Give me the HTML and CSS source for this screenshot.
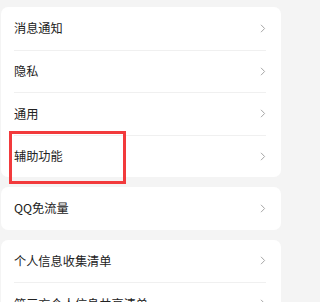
FILE: index.html
```html
<!DOCTYPE html>
<html lang="zh-CN">
<head>
<meta charset="utf-8">
<link rel="stylesheet" href="styles.css">
</head>
<body>
<div class="page">
  <section class="card">
    <div class="row"><span class="label">消息通知</span><svg class="chev" viewBox="0 0 6 9"><path d="M1 0.8 L4.6 4.5 L1 8.2"/></svg></div>
    <div class="row"><span class="label">隐私</span><svg class="chev" viewBox="0 0 6 9"><path d="M1 0.8 L4.6 4.5 L1 8.2"/></svg></div>
    <div class="row"><span class="label">通用</span><svg class="chev" viewBox="0 0 6 9"><path d="M1 0.8 L4.6 4.5 L1 8.2"/></svg></div>
    <div class="row"><span class="label">辅助功能</span><svg class="chev" viewBox="0 0 6 9"><path d="M1 0.8 L4.6 4.5 L1 8.2"/></svg></div>
  </section>
  <section class="card">
    <div class="row"><span class="label">QQ免流量</span><svg class="chev" viewBox="0 0 6 9"><path d="M1 0.8 L4.6 4.5 L1 8.2"/></svg></div>
  </section>
  <section class="card">
    <div class="row"><span class="label">个人信息收集清单</span><svg class="chev" viewBox="0 0 6 9"><path d="M1 0.8 L4.6 4.5 L1 8.2"/></svg></div>
    <div class="row"><span class="label">第三方个人信息共享清单</span><svg class="chev" viewBox="0 0 6 9"><path d="M1 0.8 L4.6 4.5 L1 8.2"/></svg></div>
  </section>
  <div class="highlight"></div>
</div>
</body>
</html>
```

FILE: styles.css
```css
html, body {
  margin: 0;
  padding: 0;
  background: #f4f4f4;
}
body {
  font-family: "Noto Sans CJK SC", "Noto Sans", sans-serif;
  overflow: hidden;
  width: 291px;
  height: 302px;
}
.page {
  position: relative;
  width: 291px;
  box-sizing: border-box;
  padding: 7px 10px 0 1px;
  display: flex;
  flex-direction: column;
  gap: 10px;
}
.card {
  background: #fff;
  border-radius: 7px;
  display: flex;
  flex-direction: column;
}
.row {
  height: 42.5px;
  display: flex;
  align-items: center;
  justify-content: space-between;
  margin: 0 15px 0 13px;
  box-sizing: border-box;
}
.row + .row {
  border-top: 1px solid #f0f0f0;
}
.label {
  font-size: 12.2px;
  color: #222;
  line-height: 1;
}
.chev {
  width: 6px;
  height: 9px;
  fill: none;
  stroke: #a6a6a6;
  stroke-width: 1;
}
.highlight {
  position: absolute;
  left: 9px;
  top: 131px;
  width: 117px;
  height: 53px;
  box-sizing: border-box;
  border: 3px solid #f23a3c;
}
```
